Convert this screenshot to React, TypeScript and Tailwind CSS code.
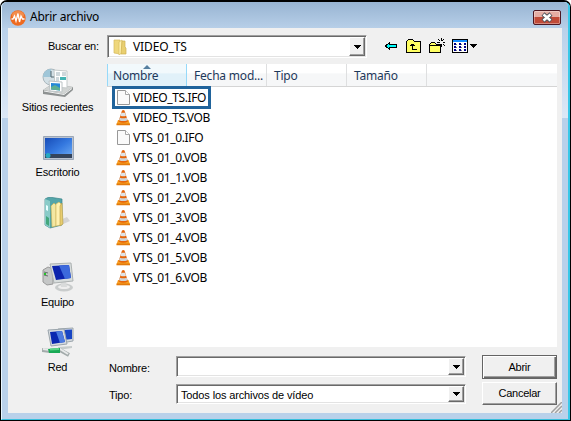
import type { ReactNode } from "react";

const SANS = "font-['Liberation_Sans',Arial,sans-serif]";
const LIST = "font-['Noto_Sans','Open_Sans',sans-serif]";

const columns = ["Nombre", "Fecha mod...", "Tipo", "Tamaño"];

const files = [
  "VIDEO_TS.IFO",
  "VIDEO_TS.VOB",
  "VTS_01_0.IFO",
  "VTS_01_0.VOB",
  "VTS_01_1.VOB",
  "VTS_01_2.VOB",
  "VTS_01_3.VOB",
  "VTS_01_4.VOB",
  "VTS_01_5.VOB",
  "VTS_01_6.VOB",
];

export default function App() {
  return (
    <div className="h-[421px] w-[571px] overflow-hidden rounded-t-[7px] border border-t-2 border-black bg-[#b9d1ea]">
      <div className="flex h-[418px] w-[569px] flex-col rounded-t-[5px] border-b border-l border-r-2 border-b-[#38bfdc] border-l-[#eaf7ff] border-r-[#38c8e8] bg-[#b9d1ea]">
        <TitleBar />
        <div className="flex">
          <FrameSide />
          <main className={`flex h-[385px] w-[554px] shrink-0 bg-[#f0f0f0] text-[11px] text-black ${SANS}`}>
            <Places />
            <section className="flex w-[455px] flex-col">
              <Toolbar />
              <FileList />
              <Footer />
            </section>
          </main>
          <FrameSide />
        </div>
      </div>
    </div>
  );
}

function FrameSide() {
  return <div className="h-[90px] w-[6px] shrink-0 bg-linear-to-b from-[#b9d1ea] to-[#dce8f6]" />;
}

function TitleBar() {
  return (
    <header className="flex h-[26px] shrink-0 items-center rounded-t-[5px] bg-linear-to-b from-[#98b4d2] to-[#b7cfe8] pl-2">
      <AppIcon />
      <h1 className={`ml-1 mt-[4px] text-[12px] leading-4 tracking-[-0.25px] text-black ${LIST}`}>Abrir archivo</h1>
      <button
        aria-label="Cerrar"
        className="mb-[-5px] ml-auto mr-[7px] flex h-[15px] w-[28px] items-center justify-center rounded-[2px] border border-[#4c1722] bg-linear-to-b from-[#e5ada4] from-45% to-[#c04a38] to-50% shadow-[inset_0_0_0_1px_rgba(255,255,255,0.35)]"
      >
        <svg className="shrink-0" width="14" height="11" viewBox="0 0 14 11">
          <path d="M3 2L11 9M11 2L3 9" stroke="#53545c" strokeWidth="4.500" />
          <path d="M3.500 2.500L10.500 8.500M10.500 2.500L3.500 8.500" stroke="#fff" strokeWidth="2.500" />
        </svg>
      </button>
    </header>
  );
}

function Places() {
  return (
    <nav className="flex w-[99px] shrink-0 flex-col">
      <p className="h-[39px] pr-2 pt-[11px] text-right leading-[14px] tracking-[-0.15px]">Buscar en:</p>
      <Place label="Sitios recientes"><RecentIcon /></Place>
      <Place label="Escritorio"><DesktopIcon /></Place>
      <Place label=""><LibraryIcon /></Place>
      <Place label="Equipo"><ComputerIcon /></Place>
      <Place label="Red"><NetworkIcon /></Place>
    </nav>
  );
}

function Place({ label, children }: { label: string; children: ReactNode }) {
  return (
    <a className="flex h-[65px] flex-col items-center">
      {children}
      <span className="mt-px whitespace-nowrap leading-[14px] tracking-[-0.2px]">{label}</span>
    </a>
  );
}

function Toolbar() {
  return (
    <div className="flex h-[36px] shrink-0 pt-[7px]">
      <Combo className="h-[23px] w-[260px]">
        <FolderIcon />
        <span className={`ml-[6px] text-[12px] tracking-[-0.1px] ${LIST}`}>VIDEO_TS</span>
      </Combo>
      <svg className="ml-[17px] mt-[3px]" width="94" height="18" viewBox="0 0 94 18" shapeRendering="crispEdges">
        <path d="M1.500 8L5.500 4.500V6.500H12.500V9.500H5.500V11.500Z" fill="#00ffff" stroke="#000" />
        <path d="M22.500 14.500V3.500L24.500 1.500H28.500L30.500 3.500H36.500V14.500Z" fill="#ffff63" stroke="#000" />
        <path d="M28.500 6V11.500H33M26 7.500H31M27 6.500H30" fill="none" stroke="#000" />
        <path d="M45.500 14.500V6.500L47.500 4.500H50.500L52.500 6.500H56.500V14.500Z" fill="#ffff63" stroke="#000" />
        <path d="M46 7.500H56" stroke="#000" />
        <path d="M57.500 0V3M57.500 6V9M53 4.500H56M59 4.500H61M54 1L56 3M59 6L61 8M60 1L58 3" stroke="#000" />
        <path d="M68.500 1.500H83.500V14.500H68.500Z" fill="#fff" stroke="#000" />
        <path d="M69 3H83" stroke="#168cff" strokeWidth="2" />
        <path d="M70 6H72M75 6H77M80 6H82M70 9H72M75 9H77M80 9H82M70 12H72M75 12H77M80 12H82" stroke="#00008c" strokeWidth="2" />
        <path d="M72 6.500H73M77 6.500H78M72 9.500H73M77 9.500H78M72 12.500H73M77 12.500H78" stroke="#7a7a7a" />
        <path d="M86 6H93L89.500 10Z" fill="#000" />
      </svg>
    </div>
  );
}

function FileList() {
  return (
    <div className={`h-[283px] w-[450px] shrink-0 bg-white text-[12px] ${LIST}`}>
      <div className="flex h-[23px] border-b border-[#d5d5d5] bg-linear-to-b from-white from-40% to-[#f6f7f8] to-45% text-[#1e395b]">
        {columns.map((name, i) => (
          <div
            key={name}
            className={`relative w-[80px] whitespace-nowrap border-r pt-1 leading-4 tracking-[-0.2px] ${
              i === 0
                ? "border-l border-[#96d9f9] bg-linear-to-b from-[#f2f9fc] from-40% to-[#e1f1f9] to-45% pl-[5px]"
                : "border-[#dedfe0] pl-[7px]"
            }`}
          >
            {name}
            {i === 0 ? (
              <svg className="absolute left-[35px] top-px" width="8" height="4" viewBox="0 0 8 4">
                <path d="M0 4L4 0L8 4Z" fill="#567f9f" />
              </svg>
            ) : null}
          </div>
        ))}
      </div>
      <ul className="pt-px">
        {files.map((name, i) => (
          <li key={name} className="relative flex h-5 items-center pl-[8px]">
            {name.endsWith("IFO") ? <PageIcon /> : <ConeIcon />}
            <span className="ml-[2px] leading-4 tracking-[-0.37px]">{name}</span>
            {i === 0 ? <span className="absolute left-[5px] top-[-2px] h-[23px] w-[99px] border-[3px] border-[#20639b]" /> : null}
          </li>
        ))}
      </ul>
    </div>
  );
}

function Footer() {
  return (
    <div className="flex pt-[8px]">
      <div className="flex w-[69px] shrink-0 flex-col pl-[2px] tracking-[-0.2px]">
        <span className="mt-[6px] h-[27px] leading-[14px]">Nombre:</span>
        <span className="leading-[14px]">Tipo:</span>
      </div>
      <div className="flex flex-col gap-[7px] pt-px">
        <Combo className="h-[21px] w-[290px]" />
        <Combo className="h-[20px] w-[290px]">
          <span className="pl-[2px] pt-px leading-[14px] tracking-[-0.13px]">Todos los archivos de vídeo</span>
        </Combo>
      </div>
      <div className="ml-[16px] flex flex-col gap-[3px]">
        <button className="h-6 w-[75px] border border-[#646464] pb-px leading-[14px] tracking-[-0.25px] shadow-[inset_1px_1px_#fff,inset_-1px_-1px_#696969,inset_-2px_-2px_#a0a0a0]">
          Abrir
        </button>
        <button className="h-[23px] w-[75px] border border-[#fff] border-b-[#696969] border-r-[#696969] pb-px leading-[14px] tracking-[-0.25px] shadow-[inset_-1px_-1px_#a0a0a0]">
          Cancelar
        </button>
      </div>
      <svg className="ml-[-6px] mt-[47px] shrink-0" width="11" height="11" viewBox="0 0 11 11">
        <path d="M0 11L11 0M4 11L11 4M8 11L11 8" stroke="#a0a0a0" strokeWidth="1.500" />
      </svg>
    </div>
  );
}

function Combo({ className, children }: { className: string; children?: ReactNode }) {
  return (
    <div
      className={`flex items-center border border-[#a0a0a0] border-b-white border-r-white bg-white pl-[2px] shadow-[inset_1px_1px_#696969,inset_-1px_-1px_#e3e3e3] ${className}`}
    >
      {children}
      <span className="my-px ml-auto mr-px flex w-4 items-center justify-center self-stretch border border-white border-b-[#696969] border-r-[#696969] bg-[#f0f0f0] shadow-[inset_-1px_-1px_#a0a0a0]">
        <svg width="7" height="4" viewBox="0 0 7 4" shapeRendering="crispEdges">
          <path d="M0 0H7L3.500 4Z" />
        </svg>
      </span>
    </div>
  );
}

function AppIcon() {
  return (
    <svg className="mt-[5px] shrink-0" width="16" height="16" viewBox="0 0 16 16">
      <circle cx="8" cy="8" r="7.700" fill="#ee6a20" />
      <ellipse cx="8" cy="5" rx="6" ry="4" fill="#f6a56c" opacity=".6" />
      <path d="M1.500 9H3L4.500 6L6 11L8 3.500L9.500 12L11 6L12.500 9H14.500" fill="none" stroke="#fff" strokeWidth="1.300" />
    </svg>
  );
}

function FolderIcon() {
  return (
    <svg className="ml-[3px] shrink-0" width="14" height="16" viewBox="0 0 14 16">
      <path d="M1 1H7V15L1 14Z" fill="#efd77c" stroke="#d6b95c" strokeWidth=".7" />
      <path d="M6 3L9 1V14L6 16Z" fill="#fff1ae" stroke="#d9bd62" strokeWidth=".7" />
      <path d="M9 2H12V8L13 9V15H8Z" fill="#e9cf70" stroke="#cfb052" strokeWidth=".7" />
    </svg>
  );
}

function PageIcon() {
  return (
    <svg className="shrink-0" width="16" height="16" viewBox="0 0 16 16">
      <path d="M2.500 .5H10.500L14.500 4.500V14.500H2.500Z" fill="#fafafa" stroke="#989898" />
      <path d="M10.500 .5V4.500H14.500" fill="#fff" stroke="#a8a8a8" />
    </svg>
  );
}

function ConeIcon() {
  return (
    <svg className="shrink-0" width="16" height="16" viewBox="0 0 16 16">
      <path d="M3 10H13.500L15 14.500H1.500Z" fill="#f9a01f" />
      <path d="M1.500 13.500H15V15.300H1.500Z" fill="#e27a0c" />
      <path d="M7 .5Q8.200 -.3 9.500 .5L13 11.500Q8.200 14 3.500 11.500Z" fill="#e5650c" />
      <path d="M6.400 2.700H10.100L11 5.700Q8.200 6.700 5.500 5.700Z" fill="#dfe3e6" />
      <path d="M4.900 7.700Q8.200 8.700 11.700 7.700L12.500 10.200Q8.200 12 4.100 10.200Z" fill="#d0d5d8" />
    </svg>
  );
}

function RecentIcon() {
  return (
    <svg className="shrink-0" width="32" height="32" viewBox="0 0 32 32">
      <path d="M1 23L10 17L31 20V23L23 30L1 27Z" fill="#8d9191" />
      <path d="M1 23L10 17L31 20L22 27Z" fill="#d1d4d3" />
      <circle cx="9" cy="10" r="8" fill="#d3e0e6" stroke="#a9b6bc" />
      <path d="M9 10V2A8 8 0 0 0 1 10Z" fill="#9fc6d8" />
      <path d="M9 4V10H13" stroke="#52666e" fill="none" />
      <path d="M12 3L25 4V21L13 20Z" fill="#fff" stroke="#c4caca" />
      <path d="M14 6H18M20 6H24M14 8H18M20 8H24M14 11H17M14 13H17" stroke="#9db0b8" />
      <path d="M18 10H24V13H18Z" fill="#45b4b4" />
      <path d="M7 14L20 15V25L8 24Z" fill="#fff" stroke="#bcc3c5" />
      <path d="M9 16L18 16.500V23.500L9 22.500Z" fill="#2588d8" />
      <path d="M9 20L13 18L18 21V23.500L9 22.500Z" fill="#5cae92" />
      <path d="M2 24L22 27.500L30 21.500" fill="none" stroke="#f2f3f3" />
    </svg>
  );
}

function DesktopIcon() {
  return (
    <svg className="shrink-0" width="32" height="32" viewBox="0 0 32 32">
      <defs>
        <linearGradient id="desk" x1="0" y1="0" x2="1" y2="1">
          <stop stopColor="#174cb7" />
          <stop offset=".5" stopColor="#3478df" />
          <stop offset="1" stopColor="#6eacf5" />
        </linearGradient>
      </defs>
      <path d="M1.500 4.500H31.500V27.500H1.500Z" fill="#b9c2d0" stroke="#9ba7b7" />
      <path d="M3 6H30V26H3Z" fill="url(#desk)" />
      <path d="M3 22H30V26H3Z" fill="#34445c" />
      <circle cx="6" cy="23.500" r="2.500" fill="#26a9c2" />
    </svg>
  );
}

function LibraryIcon() {
  return (
    <svg className="shrink-0" width="32" height="32" viewBox="0 0 32 32">
      <path d="M19 28L28 24L25 20L18 23Z" fill="#d4d4d4" />
      <path d="M3 2L7 0L20 2V28L8 31L3 28Z" fill="#54a5a9" stroke="#3b8589" strokeWidth=".7" />
      <path d="M3 2L8 4V31L3 28Z" fill="#8acbc8" />
      <path d="M9 9L12 6L14 8V29L10 30Z" fill="#f3e7a2" stroke="#c6ae54" strokeWidth=".6" />
      <path d="M14 7L17 5L19 7V28L14 29Z" fill="#fff1b0" stroke="#cdb358" strokeWidth=".6" />
      <path d="M18 9L20 6L21 27L18 29Z" fill="#e8cd70" stroke="#b99d46" strokeWidth=".6" />
      <path d="M4 8L6 9V14L4 13Z" fill="#e9ffff" />
      <path d="M4 19L7 21V29L4 27Z" fill="#43a77c" />
    </svg>
  );
}

function ComputerIcon() {
  return (
    <svg className="shrink-0" width="32" height="32" viewBox="0 0 32 32">
      <path d="M1 8L6 5L11 7V22L5 23L1 20Z" fill="#c5c7c7" stroke="#999" />
      <path d="M2 10L6 11M2 13L6 14" stroke="#6b6f6f" />
      <path d="M2 11H4V13H2Z" fill="#28c22c" />
      <ellipse cx="22" cy="25.500" rx="9" ry="4" fill="#c9cccc" />
      <ellipse cx="22" cy="25" rx="6" ry="2" fill="#eee" />
      <path d="M19 19H24L25 25H19Z" fill="#d9dbdb" />
      <path d="M8 2L29 1L31 19L12 21Z" fill="#d8dddd" stroke="#adb2b2" />
      <path d="M10 4L27 3L29 16L14 18Z" fill="#0c24ad" />
      <path d="M17 3.500L27 3L29 16L23 17Z" fill="#3c69dc" />
    </svg>
  );
}

function NetworkIcon() {
  return (
    <svg className="shrink-0" width="32" height="32" viewBox="0 0 32 32">
      <path d="M16 2L31 1V14L19 16Z" fill="#d7dce0" stroke="#9ba5ac" />
      <path d="M19 3L30 2.500V12L21 13Z" fill="#1745c4" />
      <path d="M16 20L30 19V21L16 23Z" fill="#c6cccc" />
      <path d="M6 3L22 2L25 17L9 19Z" fill="#d7dce0" stroke="#9ba5ac" />
      <path d="M8 5L20 4L23 15L10 17Z" fill="#0b28b0" />
      <path d="M14 4.500L20 4L23 15L18 16Z" fill="#4c7be0" />
      <path d="M0 23L8 24L18 23L27 28" fill="none" stroke="#a2aaaa" strokeWidth="4" />
      <path d="M1 22L8 23L18 22L26 27" fill="none" stroke="#e7e9e9" strokeWidth="2" />
      <path d="M6 22L18 21V26L7 26Z" fill="#19a955" />
      <path d="M8 22.500L17 22" stroke="#5cd487" strokeWidth="2" />
    </svg>
  );
}
